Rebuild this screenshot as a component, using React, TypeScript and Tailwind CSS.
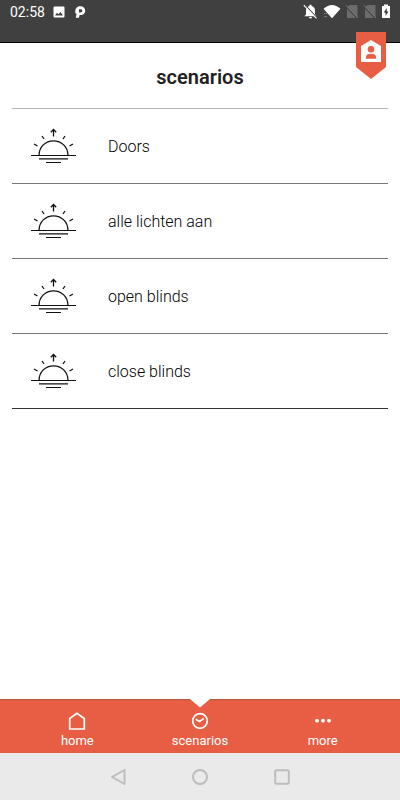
import React from "react";

const scenarios = ["Doors", "alle lichten aan", "open blinds", "close blinds"];

function SunriseIcon() {
  return (
    <svg width="46" height="36" viewBox="0 0 46 36" fill="none" stroke="#111" strokeWidth="1.3" aria-hidden="true">
      <path d="M22.5 8.5V1.5M19.8 4.2L22.5 1.5L25.2 4.2" />
      <path d="M11 8L13 11M34 8L32 11M3 16L6.5 18M42 16L38.5 18" />
      <path d="M8 27.5C8 18.8 14.5 12.8 22.5 12.8S37 18.8 37 27.5" />
      <path d="M0 27.5H45M8 30.8H37M15 34.5H30" strokeWidth="1.2" />
    </svg>
  );
}

function StatusBar() {
  return (
    <div className="flex h-[43px] items-start justify-between border-b border-black bg-[#404040] px-[10px] pt-1 text-white">
      <div className="flex h-4 items-center">
        <span className="w-[43px] text-[14px] leading-4">02:58</span>
        <svg width="12" height="12" viewBox="0 0 12 12" aria-hidden="true">
          <path fill="#fff" fillRule="evenodd" d="M1.5 .5H10.5Q11.5 .5 11.5 1.5V10.5Q11.5 11.5 10.5 11.5H1.5Q.5 11.5 .5 10.5V1.5Q.5 .5 1.5 .5ZM2 9.5H10L7.5 6L5.5 8.3L4 6.8Z" />
        </svg>
        <svg width="12" height="12" viewBox="0 0 12 12" className="ml-[10px]" aria-hidden="true">
          <path fill="#fff" fillRule="evenodd" d="M.3 5.5C.3 2 2.6 .2 5.4 .2C8.3 .2 10.2 2 10.2 4.7C10.2 7.3 8.3 9 6 9H4.6L4 11.8H.8L1.6 7.8L.3 7.2ZM4 3.2V6.4H5.6C6.7 6.4 7.3 5.7 7.3 4.8S6.7 3.2 5.6 3.2Z" />
        </svg>
      </div>
      <svg width="88" height="16" viewBox="0 0 88 16" aria-hidden="true">
        <path fill="#fff" d="M2.5 12.3H14.5L13 10.3V6.5C13 4 11.5 2.5 9.5 2V.8H7.5V2C5.5 2.5 4 4 4 6.5V10.3ZM7 13H10Q9.8 14.5 8.5 14.5T7 13Z" />
        <path d="M3.2 1.2L15.2 13.8" stroke="#404040" strokeWidth="1.2" />
        <path d="M1.8 1.2L14.5 14.4" stroke="#fff" strokeWidth="1.1" />
        <path fill="#fff" d="M21.5 4.8Q30 -2.8 38.5 4.8L30 14.2Z" />
        <path d="M22 9.5H25M22 12.5H25" stroke="#777" strokeWidth="1" />
        <g fill="#6b6b6b">
          <path d="M47.5 1H55.5V13.5L45.5 3Z M45 4.5L54 14H45Z" />
          <path d="M65.5 1H73.5V13.5L63.5 3Z M63 4.5L72 14H63Z" />
        </g>
        <path d="M43.8 1.2L56 14M61.8 1.2L74 14" stroke="#7c7c7c" strokeWidth="1" />
        <path fill="#fff" d="M80 2H82V.5H86V2H88V14H80Z" />
        <path fill="#333" d="M84.7 4L81.8 8.5H83.6V12L86.4 7.4H84.7Z" />
      </svg>
    </div>
  );
}

function ProfileFlag() {
  return (
    <button aria-label="profile" className="absolute top-8 right-[14px]">
      <svg width="30" height="47" viewBox="0 0 30 47" className="block" aria-hidden="true">
        <path d="M0 0H30V35L15 47L0 35Z" fill="#e75e44" />
        <path d="M15 8L25 14V30H5V14Z" fill="#fff" />
        <circle cx="15" cy="17.3" r="3.3" fill="#e75e44" />
        <path d="M10 26.7V25C10 22.5 12 21.8 15 21.8S20 22.5 20 25V26.7Z" fill="#e75e44" />
      </svg>
    </button>
  );
}

function NavItem({ label, children }: { label: string; children: React.ReactNode }) {
  return (
    <button className="flex flex-col items-center pt-3 text-[13px] leading-4 text-white">
      <svg width="20" height="20" viewBox="0 0 20 20" fill="none" stroke="#fff" strokeWidth="1.7" className="mb-px" aria-hidden="true">
        {children}
      </svg>
      {label}
    </button>
  );
}

export default function App() {
  return (
    <div className="relative flex min-h-screen flex-col bg-white font-[Roboto,sans-serif] text-[#212121]">
      <StatusBar />
      <ProfileFlag />
      <main className="flex-1 px-3">
        <h1 className="flex h-[66px] items-center justify-center border-b border-[#b5b5b5] pt-[2px] text-[20px] leading-6 font-semibold">
          scenarios
        </h1>
        <ul>
          {scenarios.map((name) => (
            <li key={name} className="border-b border-[#777] last:border-[#333]">
              <button className="flex h-[74px] w-full items-center pl-[19px] text-left text-[16px] leading-5 font-light text-black">
                <SunriseIcon />
                <span className="ml-[31px] pt-[2px]">{name}</span>
              </button>
            </li>
          ))}
        </ul>
      </main>
      <nav className="relative grid h-[54px] grid-cols-3 border-t border-[#b8573f] bg-[#e75e44] px-4">
        <svg width="20" height="9" viewBox="0 0 20 9" className="absolute -top-px left-1/2 -translate-x-1/2" aria-hidden="true">
          <path d="M0 0H20L10 8.5Z" fill="#fff" />
        </svg>
        <NavItem label="home">
          <path d="M2.7 17V6.5L10 1.2L17.3 6.5V17Z" />
        </NavItem>
        <NavItem label="scenarios">
          <circle cx="10" cy="9" r="7.3" />
          <path d="M5.7 7.3L9.5 9.5L13.7 6.5" />
        </NavItem>
        <NavItem label="more">
          <g fill="#fff" stroke="none">
            <circle cx="4" cy="8.7" r="1.9" />
            <circle cx="10" cy="8.7" r="1.9" />
            <circle cx="16" cy="8.7" r="1.9" />
          </g>
        </NavItem>
      </nav>
      <div className="flex h-[47px] items-center justify-center gap-[62px] bg-[#eaeaea]">
        <button aria-label="Back">
          <svg width="20" height="20" viewBox="0 0 20 20" fill="none" stroke="#bdbdbd" strokeWidth="2" strokeLinejoin="round" className="block">
            <path d="M16.5 3V17L4 10Z" />
          </svg>
        </button>
        <button aria-label="Home screen">
          <svg width="20" height="20" viewBox="0 0 20 20" fill="none" stroke="#bdbdbd" strokeWidth="2" className="block">
            <circle cx="10" cy="10" r="7" />
          </svg>
        </button>
        <button aria-label="Recent apps">
          <svg width="20" height="20" viewBox="0 0 20 20" fill="none" stroke="#bdbdbd" strokeWidth="2" className="block">
            <rect x="3.2" y="3.2" width="13.6" height="13.6" rx="1.5" />
          </svg>
        </button>
      </div>
    </div>
  );
}
